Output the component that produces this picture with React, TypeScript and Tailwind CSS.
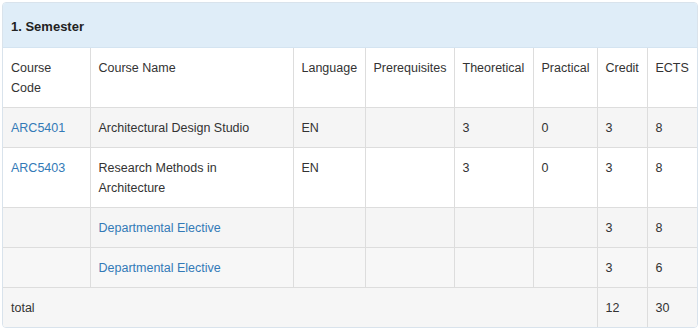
export default function App() {
  const rows = [
    { code: 'ARC5401', name: 'Architectural Design Studio', lang: 'EN', pre: '', th: '3', pr: '0', credit: '3', ects: '8', bg: 'bg-[#f5f5f5]' },
    { code: 'ARC5403', name: 'Research Methods in Architecture', lang: 'EN', pre: '', th: '3', pr: '0', credit: '3', ects: '8', bg: 'bg-white' },
    { code: '', name: 'Departmental Elective', elective: true, lang: '', pre: '', th: '', pr: '', credit: '3', ects: '8', bg: 'bg-[#f5f5f5]' },
    { code: '', name: 'Departmental Elective', elective: true, lang: '', pre: '', th: '', pr: '', credit: '3', ects: '6', bg: 'bg-[#f7f7f7]' },
  ];

  const cell = 'border border-[#dddddd] px-[8px] pt-[10px] pb-[9px] align-top text-[#333333]';

  return (
    <div className="min-h-[329px] bg-white p-[2px] font-['Liberation_Sans',Arial,sans-serif] text-[12.5px] leading-[20px] text-[#333333]">
      <div className="overflow-hidden rounded-[4px] border border-[#d9e3ec]">
        {/* Panel heading */}
        <div className="flex h-[45px] items-center border-b border-[#d4e4f1] bg-[#dfedf8] px-[8px] pt-[3px]">
          <span className="text-[13px] font-bold text-[#222]">1. Semester</span>
        </div>

        <table className="w-full table-fixed border-collapse border-hidden">
          <colgroup>
            <col className="w-[87px]" />
            <col className="w-[203px]" />
            <col className="w-[72px]" />
            <col className="w-[89px]" />
            <col className="w-[79px]" />
            <col className="w-[64px]" />
            <col className="w-[50px]" />
            <col />
          </colgroup>
          <thead>
            <tr className="bg-white text-left">
              {['Course Code', 'Course Name', 'Language', 'Prerequisites', 'Theoretical', 'Practical', 'Credit', 'ECTS'].map((h) => (
                <th key={h} className={`${cell} font-normal`}>
                  {h === 'Course Code' ? (
                    <>
                      Course
                      <br />
                      Code
                    </>
                  ) : (
                    <>
                      {h}
                      <br />
                      &nbsp;
                    </>
                  )}
                </th>
              ))}
            </tr>
          </thead>
          <tbody>
            {rows.map((r, i) => (
              <tr key={i} className={r.bg}>
                <td className={cell}>
                  <span className="text-[#337ab7]">{r.code}</span>
                </td>
                <td className={cell}>
                  {r.elective ? <span className="text-[#337ab7]">{r.name}</span> : r.name}
                </td>
                <td className={cell}>{r.lang}</td>
                <td className={cell}>{r.pre}</td>
                <td className={cell}>{r.th}</td>
                <td className={cell}>{r.pr}</td>
                <td className={cell}>{r.credit}</td>
                <td className={cell}>{r.ects}</td>
              </tr>
            ))}
            <tr className="bg-[#f6f6f6]">
              <td colSpan={6} className={cell}>
                total
              </td>
              <td className={cell}>12</td>
              <td className={cell}>30</td>
            </tr>
          </tbody>
        </table>
      </div>
    </div>
  );
}
